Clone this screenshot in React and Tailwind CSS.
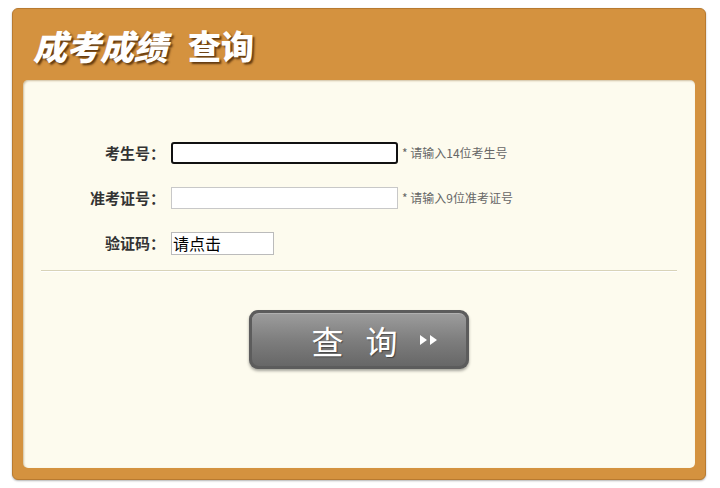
import React from 'react';

const font = { fontFamily: '"Microsoft YaHei", "Noto Sans CJK SC", sans-serif' };

function Row({ label, children, hint }) {
  return (
    <div className="flex items-center h-[22px]">
      <div className="w-[148px] text-right text-[15px] font-bold text-[#333] pr-[6px]">{label}</div>
      {children}
      {hint && <span className="ml-[4px] text-[12px] text-[#666]">{hint}</span>}
    </div>
  );
}

export default function App() {
  const shadow = { textShadow: '2px 2px 2px rgba(60,30,0,0.75)' };
  return (
    <div className="w-[720px] h-[488px] bg-white pt-[8px] pl-[12px]" style={font}>
      <div className="w-[694px] h-[472px] bg-[#d4923f] rounded-[6px] border border-[#b87a30] shadow-[0_1px_2px_rgba(0,0,0,0.3)] flex flex-col px-[10px] pb-[11px]">
        <div className="h-[71px] flex items-center pl-[10px] pt-[2px]">
          <span className="text-white text-[34px] font-black italic tracking-[-0.5px]" style={shadow}>
            成考成绩
          </span>
          <span className="text-white text-[33px] font-black ml-[21px]" style={shadow}>
            查询
          </span>
        </div>
        <div className="flex-1 bg-[#fdfbee] rounded-[5px] shadow-[inset_1px_1px_2px_rgba(120,80,20,0.35)] pt-[62px]">
          <div className="flex flex-col gap-[23px]">
            <Row label="考生号：" hint="* 请输入14位考生号">
              <input className="w-[227px] h-[22px] bg-white border-2 border-[#111] rounded-[3px] outline-none" />
            </Row>
            <Row label="准考证号：" hint="* 请输入9位准考证号">
              <input className="w-[227px] h-[22px] bg-white border border-[#c8c8c8] outline-none" />
            </Row>
            <Row label="验证码：">
              <div className="w-[103px] h-[23px] bg-white border border-[#bbb] text-[16px] leading-[21px] text-black pl-[1px]">请点击</div>
            </Row>
          </div>
          <div className="mx-[18px] mt-[16px] h-[2px] bg-[#d8d3b8] border-b border-white"></div>
          <div className="flex justify-center mt-[38px] pr-[1px]">
            <div className="w-[220px] h-[59px] rounded-[9px] bg-[#5c5c5c] p-[3px] shadow-[0_2px_3px_rgba(0,0,0,0.35)]">
              <div className="w-full h-full rounded-[7px] bg-gradient-to-b from-[#9c9c9c] via-[#7e7e7e] to-[#676767] flex items-center justify-center pl-[34px] border-t border-[#b0b0b0]">
                <span className="text-white text-[32px] tracking-[22px]" style={{ textShadow: '1px 1px 1px rgba(0,0,0,0.4)' }}>查询</span>
                <svg width="22" height="12" viewBox="0 0 22 12" className="ml-[-2px]">
                  <path d="M2 1 L9 6 L2 11 Z" fill="white" />
                  <path d="M12 1 L19 6 L12 11 Z" fill="white" />
                </svg>
              </div>
            </div>
          </div>
        </div>
      </div>
    </div>
  );
}
